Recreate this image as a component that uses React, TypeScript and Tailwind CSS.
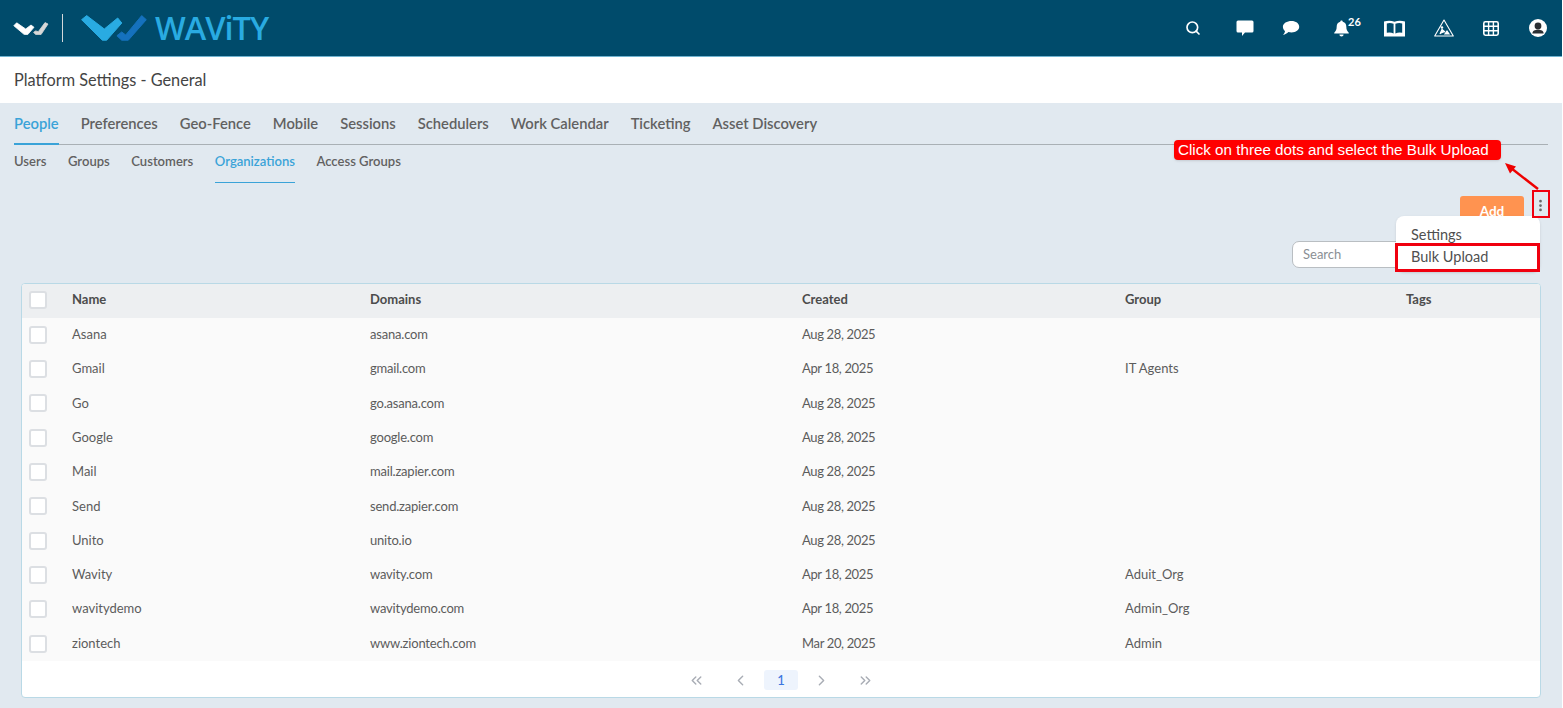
import { Search, MoreVertical, ChevronLeft, ChevronRight, ChevronsLeft, ChevronsRight } from "lucide-react";

const tabs = ["People", "Preferences", "Geo-Fence", "Mobile", "Sessions", "Schedulers", "Work Calendar", "Ticketing", "Asset Discovery"];
const subTabs = ["Users", "Groups", "Customers", "Organizations", "Access Groups"];

const rows = [
  { name: "Asana", domain: "asana.com", created: "Aug 28, 2025", group: "" },
  { name: "Gmail", domain: "gmail.com", created: "Apr 18, 2025", group: "IT Agents" },
  { name: "Go", domain: "go.asana.com", created: "Aug 28, 2025", group: "" },
  { name: "Google", domain: "google.com", created: "Aug 28, 2025", group: "" },
  { name: "Mail", domain: "mail.zapier.com", created: "Aug 28, 2025", group: "" },
  { name: "Send", domain: "send.zapier.com", created: "Aug 28, 2025", group: "" },
  { name: "Unito", domain: "unito.io", created: "Aug 28, 2025", group: "" },
  { name: "Wavity", domain: "wavity.com", created: "Apr 18, 2025", group: "Aduit_Org" },
  { name: "wavitydemo", domain: "wavitydemo.com", created: "Apr 18, 2025", group: "Admin_Org" },
  { name: "ziontech", domain: "www.ziontech.com", created: "Mar 20, 2025", group: "Admin" },
];

function Checkbox() {
  return <div className="h-[18px] w-[18px] rounded-[3px] border-2 border-[#dcdfe3] bg-white" />;
}

function Logo() {
  return (
    <div className="flex items-center">
      <svg width="36" height="13" viewBox="0 0 36 13" className="ml-[13px]">
        <polygon points=".8,3.7 3.7,.8 12.7,7 18,3 21,5.3 14.7,12.6 11.3,12.6" fill="#ffffff" stroke="#ffffff" strokeWidth=".8" strokeLinejoin="round" />
        <polygon points="20.6,10.3 22.7,8.9 25.3,9.7 32,.6 35,2 28,12.6 22.7,12.6" fill="#d8d8d8" stroke="#d8d8d8" strokeWidth=".8" strokeLinejoin="round" />
      </svg>
      <div className="ml-[13px] h-[28px] w-px bg-[#d4d8da]" />
      <svg width="66" height="26" viewBox="0 0 66 26" className="ml-[18px]">
        <polygon points=".6,4.7 5.7,.6 23.3,14 36.7,3 40.8,8 25.7,25.2 21.3,25.2" fill="#29abe2" stroke="#29abe2" strokeWidth="1" strokeLinejoin="round" />
        <polygon points="35.9,20.7 40.7,17 44.7,20 60.7,.6 65.3,4.7 47.3,25.2 40.7,25.2" fill="#1571bd" stroke="#1571bd" strokeWidth="1" strokeLinejoin="round" />
      </svg>
      <span className="ml-[8px] font-['Open_Sans',sans-serif] text-[32.5px] font-semibold leading-none tracking-[-1px] text-[#29abe2]">WAViTY</span>
    </div>
  );
}

function HeaderIcons() {
  return (
    <div className="flex items-center text-white">
      <Search size={16} strokeWidth={2.5} className="mr-[35px]" />
      <svg width="18" height="17" viewBox="0 0 18 17" className="mr-[28px]" fill="white">
        <path d="M2 0.5 H16 Q17.5 0.5 17.5 2 V11 Q17.5 12.5 16 12.5 H9 L6 16 V12.5 H2 Q0.5 12.5 0.5 11 V2 Q0.5 0.5 2 0.5 Z" />
      </svg>
      <svg width="18" height="16" viewBox="0 0 18 16" className="mr-[33px]" fill="white">
        <path d="M9.5 1 C13.9 1 17.2 3.4 17.2 6.7 C17.2 10 13.9 12.4 9.5 12.4 C8.4 12.4 7.4 12.3 6.4 12 C5 13.4 3.2 14.6 1 15 C2.2 13.8 2.9 12.4 3 11 C1.6 9.9 0.9 8.4 0.9 6.7 C0.9 3.4 5 1 9.5 1 Z" />
      </svg>
      <div className="relative mr-[34px]">
        <svg width="17" height="17" viewBox="0 0 17 18" fill="white">
          <path d="M8.5 0.5 C9.3 0.5 9.8 1 9.8 1.8 C12.5 2.4 13.6 4.6 13.6 7.2 C13.6 10.4 14.6 11.8 16.2 13.4 V14.4 H0.8 V13.4 C2.4 11.8 3.4 10.4 3.4 7.2 C3.4 4.6 4.5 2.4 7.2 1.8 C7.2 1 7.7 0.5 8.5 0.5 Z" />
          <path d="M6.3 15.4 H10.7 C10.7 16.8 9.7 17.5 8.5 17.5 C7.3 17.5 6.3 16.8 6.3 15.4 Z" />
        </svg>
        <span className="absolute left-[15px] top-[-4px] text-[11px] font-bold leading-none">26</span>
      </div>
      <svg width="21" height="17" viewBox="0 0 21 17" className="mr-[29px]">
        <path fillRule="evenodd" fill="white" d="M0 1.6 Q5.5 -0.4 10.5 1.8 Q15.5 -0.4 21 1.6 V16.4 H0 Z M2.8 3.4 V12.8 Q6.4 12 9.6 13.4 V3.8 Q6.2 2.4 2.8 3.4 Z M11.4 3.8 V13.4 Q14.6 12 18.2 12.8 V3.4 Q14.8 2.4 11.4 3.8 Z" />
      </svg>
      <svg width="20" height="18" viewBox="0 0 20 18" className="mr-[29px]" fill="none" stroke="white">
        <path d="M10 1 L19.3 17 H0.7 Z" strokeWidth="1.1" strokeLinejoin="round" />
        <circle cx="8" cy="8.5" r="1.2" fill="white" stroke="none" />
        <path d="M6 15 L8 10.5 L11 13 M11 15 L15 15 L13 12 Z" strokeWidth="1.2" fill="white" />
      </svg>
      <svg width="16" height="15" viewBox="0 0 16 15" className="mr-[30px]" fill="none" stroke="white">
        <rect x="0.8" y="0.8" width="14.4" height="13.4" rx="1.6" strokeWidth="1.6" />
        <path d="M0.8 5.2 H15.2 M0.8 9.8 H15.2 M5.6 0.8 V14.2 M10.4 0.8 V14.2" strokeWidth="1.4" />
      </svg>
      <svg width="18" height="18" viewBox="0 0 18 18" className="mr-[15px]">
        <circle cx="9" cy="9" r="9" fill="white" />
        <circle cx="9" cy="7" r="3.4" fill="#2b2f33" />
        <path d="M3.4 14.4 C3.4 11.8 6 10.8 9 10.8 C12 10.8 14.6 11.8 14.6 14.4 Z" fill="#2b2f33" />
      </svg>
    </div>
  );
}

export default function App() {
  return (
    <div className="h-[708px] w-[1563px] overflow-hidden bg-white">
      <div className="relative h-[708px] w-[1562px] bg-[#e1e9f0] font-['Lato',sans-serif] text-[#5c5c5c]">
        <header className="flex h-[57px] items-center justify-between border-b border-[#6fb3d0] bg-[#004b6b]">
          <Logo />
          <HeaderIcons />
        </header>
        <div className="flex h-[46px] items-center bg-white pl-[14px] text-[16.3px] text-[#444]">Platform Settings - General</div>

        <div className="mx-[14px] flex h-[42px] gap-[22px] border-b border-[#a9b0b5]">
          {tabs.map((t, i) => (
            <div
              key={t}
              className={
                i === 0
                  ? "-mb-px flex items-center border-b-2 border-[#3aa3d8] text-[14.75px] font-semibold text-[#3aa3d8]"
                  : "flex items-center text-[14.75px] font-semibold text-[#616161]"
              }
            >
              {t}
            </div>
          ))}
        </div>

        <div className="ml-[14px] flex h-[38px] gap-[21.5px]">
          {subTabs.map((t) => (
            <div
              key={t}
              className={
                t === "Organizations"
                  ? "flex items-center border-b border-[#3aa3d8] pb-[3px] text-[13.05px] font-semibold text-[#3aa3d8]"
                  : "flex items-center border-b border-transparent pb-[3px] text-[13.05px] font-semibold text-[#616161]"
              }
            >
              {t}
            </div>
          ))}
        </div>

        <div className="mr-[12px] mt-[13px] flex h-[26px] justify-end">
          <button className="mr-[8px] h-[30px] w-[64px] rounded-[3px] bg-[#ff9350] text-[13.5px] font-bold text-white">Add</button>
          <div className="flex h-[18px] w-[18px] items-center justify-center pr-[2px]">
            <MoreVertical size={15} strokeWidth={2.4} className="text-[#666]" />
          </div>
        </div>

        <div className="mt-[19px] flex pl-[1292px]">
          <div className="flex h-[27px] w-[150px] items-center rounded-[7px] border border-[#b9bec2] bg-white pl-[10px] text-[13px] text-[#8a8f94]">Search</div>
        </div>

        <div className="mx-[21px] mt-[15px] w-[1520px] overflow-hidden rounded-[4px] border border-[#b9d9e6] bg-white">
          <div className="grid h-[33.7px] grid-cols-[50px_298px_432px_323px_281px_1fr] items-center bg-[#edeff1] pb-[2px] text-[13px] font-bold text-[#4c4c4c]">
            <div className="pl-[7px]"><Checkbox /></div>
            <div>Name</div>
            <div>Domains</div>
            <div>Created</div>
            <div>Group</div>
            <div>Tags</div>
          </div>
          {rows.map((r) => (
            <div key={r.name} className="grid h-[34.3px] grid-cols-[50px_298px_432px_323px_281px_1fr] items-center bg-[#fafafa] text-[13px] text-[#5c5c5c]">
              <div className="pl-[7px]"><Checkbox /></div>
              <div>{r.name}</div>
              <div className="tracking-[-0.2px]">{r.domain}</div>
              <div className="tracking-[-0.35px]">{r.created}</div>
              <div>{r.group}</div>
              <div />
            </div>
          ))}
          <div className="flex h-[36.3px] items-center justify-center pt-[3px] text-[#a9adb5]">
            <ChevronsLeft size={17} className="mr-[27px]" />
            <ChevronLeft size={17} className="mr-[15px]" />
            <div className="flex h-[20px] w-[34px] items-center justify-center rounded-[3px] bg-[#eef4fd] text-[13px] font-medium text-[#3b76e0]">1</div>
            <ChevronRight size={17} className="ml-[15px]" />
            <ChevronsRight size={17} className="ml-[27px]" />
          </div>
        </div>

        {/* dropdown sits over the Add button and the search box */}
        <div className="absolute left-[1396px] top-[216px] h-[56px] w-[144px] rounded-[8px] bg-white pt-[9px] text-[14.5px] leading-[20px] text-[#4f4f4f] shadow-sm">
          <div className="pl-[15px]">Settings</div>
          <div className="mt-[2px] pl-[15px]">Bulk Upload</div>
        </div>

        {/* screenshot annotations */}
        <div className="absolute left-[1395px] top-[243px] h-[29px] w-[145px] border-[3px] border-[#f0000f]" />
        <div className="absolute left-[1532px] top-[190px] h-[28px] w-[18px] border-[2.5px] border-[#f0000f]" />
        <div className="absolute left-[1174px] top-[140px] flex h-[20px] w-[327px] items-center rounded-[4px] bg-[#ff0000] pl-[4px] font-['Liberation_Sans',sans-serif] text-[15.2px] text-white shadow-sm">
          Click on three dots and select the Bulk Upload
        </div>
        <svg className="absolute left-[1500px] top-[158px]" width="42" height="34" viewBox="0 0 42 34">
          <path d="M38 31 L11 10" stroke="#ee0000" strokeWidth="2.4" />
          <path d="M5 5 L16 8.5 L10 15.5 Z" fill="#ee0000" />
        </svg>
      </div>
    </div>
  );
}
